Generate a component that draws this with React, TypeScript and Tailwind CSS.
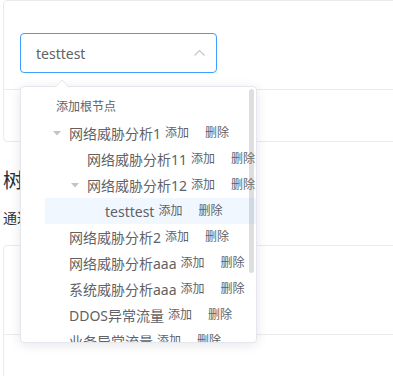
interface TreeRow {
  label: string;
  level: 0 | 1 | 2;
  expanded?: boolean;
  current?: boolean;
}

const rows: TreeRow[] = [
  { label: "网络威胁分析1", level: 0, expanded: true },
  { label: "网络威胁分析11", level: 1 },
  { label: "网络威胁分析12", level: 1, expanded: true },
  { label: "testtest", level: 2, current: true },
  { label: "网络威胁分析2", level: 0 },
  { label: "网络威胁分析aaa", level: 0 },
  { label: "系统威胁分析aaa", level: 0 },
  { label: "DDOS异常流量", level: 0 },
  { label: "业务异常流量", level: 0 },
];

const indent = ["pl-0", "pl-[18px]", "pl-[36px]"];

function Caret() {
  return (
    <svg width="8" height="5" viewBox="0 0 8 5">
      <polygon points="0,0 8,0 4,4.5" fill="#c0c4cc" />
    </svg>
  );
}

function TreeDropdown() {
  return (
    <div className="absolute left-0 top-[53px] z-10 w-[237px] h-[257px] rounded-[4px] border border-[#e4e7ed] bg-white shadow-[0_2px_12px_0_rgba(0,0,0,0.1)]">
      {/* popper arrow */}
      <svg className="absolute left-[34px] top-[-8px]" width="14" height="9" viewBox="0 0 14 9">
        <polygon points="0,9 7,1.5 14,9" fill="white" />
        <polyline points="0,8.5 7,1 14,8.5" fill="none" stroke="#e4e7ed" />
      </svg>
      <div className="h-full overflow-hidden rounded-[4px] pt-[6px]">
        <div className="h-[27px] flex items-center pl-[35px] text-[12px] text-[#606266]">添加根节点</div>
        <div className="pl-[24px]">
          {rows.map((row) => (
            <div
              key={row.label}
              className={
                "flex items-center h-[26px] whitespace-nowrap " +
                indent[row.level] +
                (row.current ? " bg-[#f0f7ff]" : "")
              }
            >
              <span className="w-[24px] shrink-0 flex justify-center">
                {row.expanded && <Caret />}
              </span>
              <span className="text-[14px] text-[#606266]">{row.label}</span>
              <span className="ml-[4px] text-[12px] text-[#606266]">添加</span>
              <span className="ml-[16px] text-[12px] text-[#606266]">删除</span>
            </div>
          ))}
        </div>
      </div>
      <div className="absolute right-[2px] top-[2px] w-[5px] h-[184px] rounded-full bg-[rgba(144,147,153,0.3)]" />
    </div>
  );
}

export default function App() {
  return (
    <div className="w-[393px] h-[376px] overflow-hidden bg-white pl-[3px] font-['Noto_Sans','Noto_Sans_CJK_SC',sans-serif]">
      <div className="w-[420px] rounded-[4px] border border-[#ebebeb]">
        <div className="h-[89px] border-b border-[#ebebeb] pl-[16px] pt-[32px]">
          <div className="relative w-[197px]">
            <div className="h-[40px] flex items-center justify-between rounded-[4px] border border-[#409eff] pl-[15px] pr-[11px]">
              <span className="text-[14px] text-[#606266]">testtest</span>
              <svg width="11" height="6" viewBox="0 0 11 6">
                <polyline points="0.5,5.5 5.5,0.6 10.5,5.5" fill="none" stroke="#c0c4cc" strokeWidth="1.1" />
              </svg>
            </div>
            <TreeDropdown />
          </div>
        </div>
        <div className="h-[51px]" />
      </div>

      <h3 className="mt-[25px] text-[20px] leading-[28px] text-[#1f2f3d]">树形选择</h3>
      <p className="mt-[12px] text-[14px] leading-[22px] text-[#303133]">通过树形结构选择节点</p>

      <div className="mt-[16px] w-[420px] rounded-[4px] border border-[#ebebeb]">
        <div className="h-[89px] border-b border-[#ebebeb]" />
        <div className="h-[60px]" />
      </div>
    </div>
  );
}
